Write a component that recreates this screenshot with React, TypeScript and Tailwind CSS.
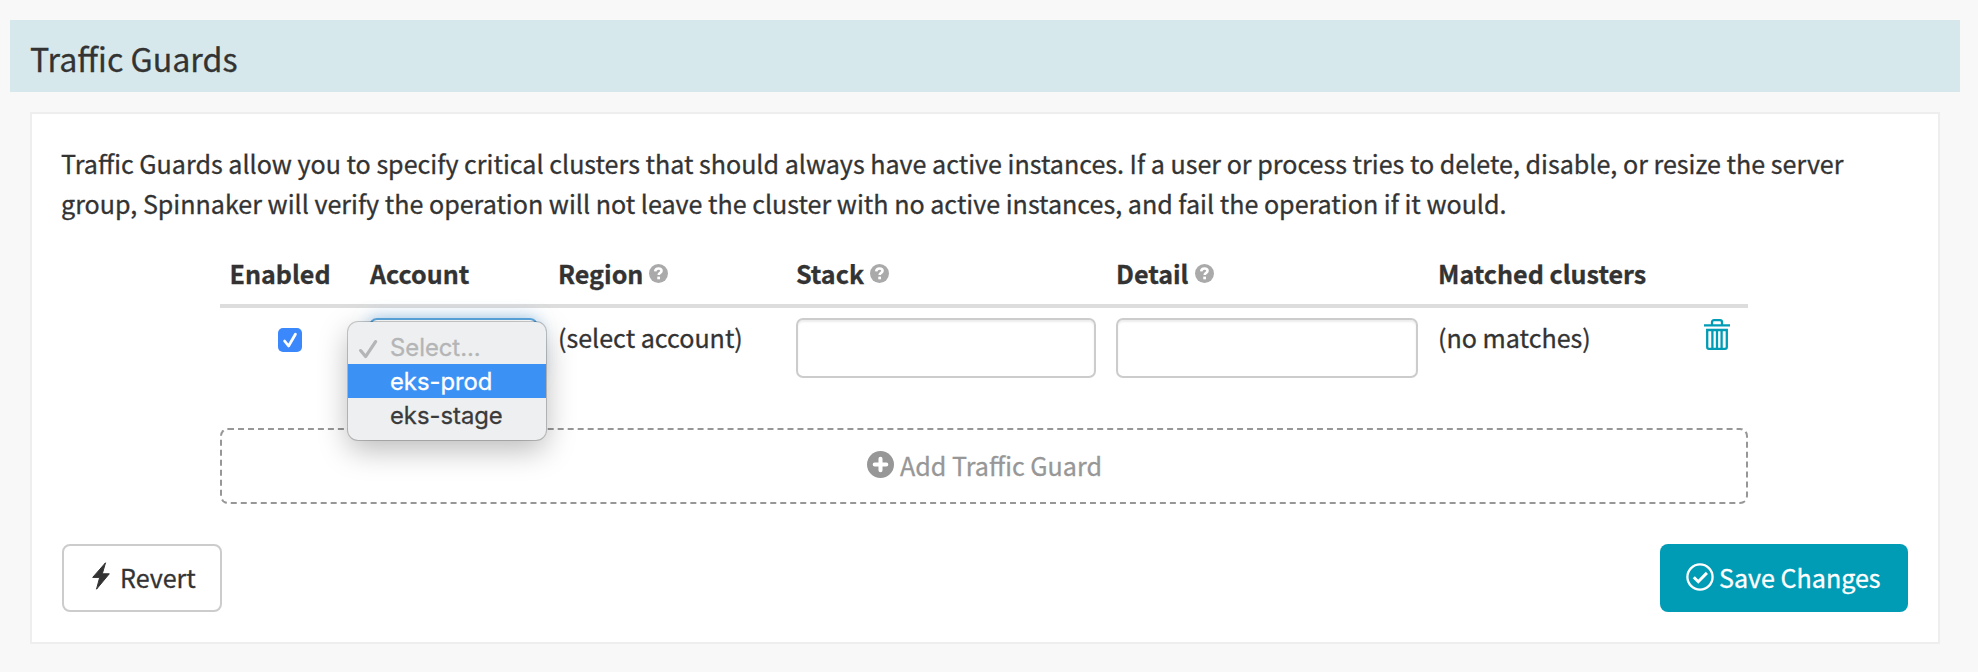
import React from "react";

const columns = "grid grid-cols-[139px_190px_237px_321px_322px_265px_54px]";

function HelpIcon() {
  return (
    <svg viewBox="0 0 20 20" className="mt-px size-[19px] shrink-0" aria-hidden="true">
      <circle cx="10" cy="10" r="10" fill="#aaaaaa" />
      <path d="M6.5 7.8C6.7 5.8 8 4.8 10 4.8c2 0 3.2 1 3.2 2.6 0 2.1-3 1.9-3 4.2" fill="none" stroke="#fff" strokeWidth="2.7" />
      <rect x="8.7" y="13.3" width="2.9" height="2.8" fill="#fff" />
    </svg>
  );
}

function TrashIcon() {
  return (
    <svg viewBox="0 0 26 31" className="h-[31px] w-[26px]" fill="none" stroke="#009cb5" strokeWidth="2.3" aria-hidden="true">
      <path d="M0 6.3h26M8 6V3.2Q8 1.2 10 1.2h6Q18 1.2 18 3.2V6" />
      <path d="M3.2 11h19.6v17q0 1.8-1.8 1.8H5q-1.8 0-1.8-1.8zM8.4 11v18.5M13 11v18.5M17.6 11v18.5" />
    </svg>
  );
}

function Heading({ label, help, inset = "pl-[9px]" }: { label: string; help?: boolean; inset?: string }) {
  return (
    <div className={`flex h-10 items-center gap-[6px] whitespace-nowrap font-bold ${inset}`}>
      {label}
      {help && <HelpIcon />}
    </div>
  );
}

function AccountMenu() {
  return (
    <div className="absolute left-[-21px] top-[14px] z-10 h-[118px] w-[198px] rounded-[10px] bg-[#eeeff0] pt-[8px] font-['Inter',sans-serif] text-[23.8px] leading-[36px] text-[#3a3a3a] shadow-[0_0_0_1px_rgba(0,0,0,0.2),0_10px_30px_rgba(0,0,0,0.27)]">
      <div className="flex h-[34px] items-center pt-px text-[#b4b5b6]">
        <svg viewBox="0 0 20 20" className="ml-[10px] mr-[12px] mt-0.5 size-5" fill="none" stroke="#b4b5b6" strokeWidth="3.2" strokeLinecap="round" strokeLinejoin="round" aria-hidden="true">
          <path d="M2.6 11.6l5 6L17.6 2.6" />
        </svg>
        Select...
      </div>
      <div className="h-[34px] bg-[#3c91f5] pl-[42px] text-white">eks-prod</div>
      <div className="h-[34px] pl-[42px]">eks-stage</div>
    </div>
  );
}

export default function App() {
  return (
    <div className="h-[672px] w-full bg-[#f8f8f8] pl-2.5 pr-[18px] pt-5 font-['Noto_Sans_CJK_SC',sans-serif] text-[25.08px] leading-10 text-[#333333] [-webkit-text-stroke:0.3px]">
      <header className="flex h-[72px] items-center bg-[#d6e8ec] pl-5 pt-[3px]">
        <h1 className="text-[32.2px] leading-[48px]">Traffic Guards</h1>
      </header>

      <section className="ml-5 mr-5 mt-5 flex h-[532px] flex-col border-2 border-[#eeeeee] bg-white px-[30px] pt-[29px]">
        <p className="-ml-px whitespace-nowrap">
          Traffic Guards allow you to specify critical clusters that should always have active instances. If a user or process tries to delete, disable, or resize the server
          <br />
          group, Spinnaker will verify the operation will not leave the cluster with no active instances, and fail the operation if it would.
        </p>

        <div className="ml-[158px] mt-[30px] w-[1528px]">
          <div className={`${columns} h-[55px] border-b-4 border-[#dddddd]`}>
            <Heading label="Enabled" inset="pl-[9.5px]" />
            <Heading label="Account" inset="pl-[11px]" />
            <Heading label="Region" help />
            <Heading label="Stack" help inset="pl-2.5" />
            <Heading label="Detail" help />
            <Heading label="Matched clusters" />
          </div>
          <div className={`${columns} h-[120px] pt-[10px]`}>
            <div className="pl-[58px] pt-[10px]">
              <div className="flex size-6 items-center justify-center rounded-[5px] bg-[#3b88fd]">
                <svg viewBox="0 0 24 24" className="size-6" fill="none" stroke="#fff" strokeWidth="2.8" strokeLinecap="round" strokeLinejoin="round" aria-hidden="true">
                  <path d="M6.6 13l4 5L17.4 6.2" />
                </svg>
              </div>
            </div>
            <div className="relative ml-2.5 mr-[11px]">
              <div className="h-[60px] rounded-[8px] border-2 border-[#5aa7e0] shadow-[0_0_16px_rgba(102,175,233,0.6)]" />
              <div className="absolute left-0 top-[-10px]">
                <AccountMenu />
              </div>
            </div>
            <div className="-mt-px pl-[9px]">(select account)</div>
            <div className="ml-2.5 mr-[11px] h-[60px] rounded-[7px] border-2 border-[#cccccc] shadow-[inset_0_2px_2px_rgba(0,0,0,0.075)]" />
            <div className="ml-[9px] mr-[11px] h-[60px] rounded-[7px] border-2 border-[#cccccc] shadow-[inset_0_2px_2px_rgba(0,0,0,0.075)]" />
            <div className="-mt-px pl-[9px]">(no matches)</div>
            <div className="pl-[10px] pt-px">
              <TrashIcon />
            </div>
          </div>
          <button className="flex h-[76px] w-full items-center justify-center gap-[6px] rounded-[8px] border-2 border-dashed border-[#979797] pb-[3px] pl-px text-[#979797]">
            <svg viewBox="0 0 28 28" className="mb-px size-[27px]" aria-hidden="true">
              <circle cx="14" cy="14" r="14" fill="#979797" />
              <path d="M14 8v12M8 14h12" stroke="#fff" strokeWidth="4.2" strokeLinecap="round" />
            </svg>
            Add Traffic Guard
          </button>
        </div>

        <footer className="mt-10 flex justify-between">
          <button className="flex h-[68px] w-40 items-center rounded-[8px] border-2 border-[#cccccc] pb-[3px] pl-7">
            <svg viewBox="0 0 18 28" className="mb-px mr-[10px] h-7 w-[18px]" fill="#333333" stroke="#333333" strokeLinejoin="round" aria-hidden="true">
              <path d="M13.5.8L.7 15.4h7L4.5 27.2 17.3 11.8h-7z" />
            </svg>
            Revert
          </button>
          <button className="flex h-[68px] w-[248px] items-center rounded-[8px] bg-[#009cb5] pb-[3px] pl-[26px] text-white">
            <svg viewBox="0 0 28 28" className="mt-px mr-[5px] size-7" fill="none" stroke="#fff" strokeWidth="2.3" aria-hidden="true">
              <circle cx="14" cy="14" r="12.6" />
              <path d="M7.8 14.2l4.5 4.5 8.6-8.8" strokeWidth="3" />
            </svg>
            Save Changes
          </button>
        </footer>
      </section>
    </div>
  );
}
